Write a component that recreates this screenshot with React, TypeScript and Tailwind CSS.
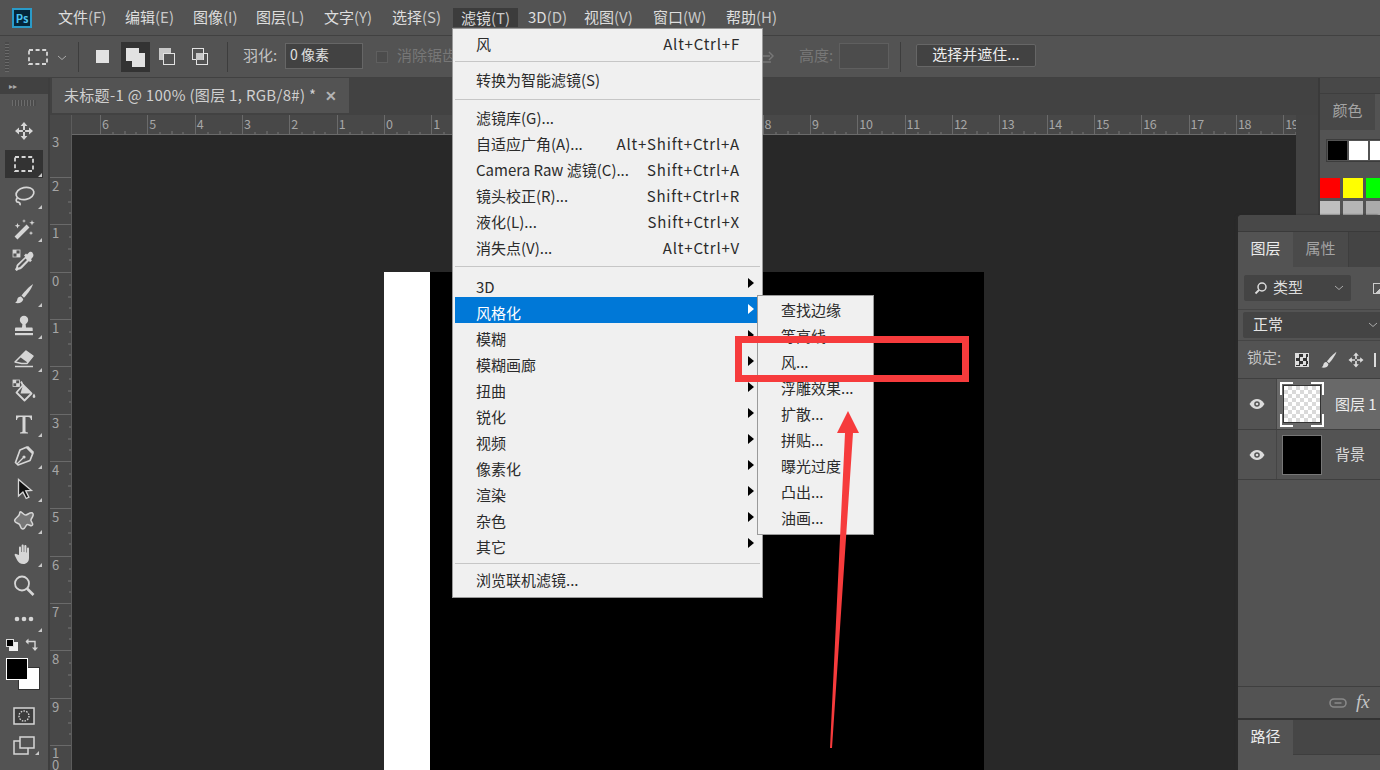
import React from "react";

const FONT = "font-['Noto_Sans_CJK_SC','Noto_Sans',sans-serif]";
const C = "#d6d6d6";

function I({ size = 24, className = "", children }: { size?: number; className?: string; children: React.ReactNode }) {
  return (
    <svg width={size} height={size} viewBox="0 0 24 24" fill="none" className={className}>
      {children}
    </svg>
  );
}

const MoveIcon = ({ size = 24, color = C }: { size?: number; color?: string }) => (
  <I size={size}>
    <path d="M12 3l3.4 4H13v3.9h-2V7H8.6zM12 21l-3.400-4H11v-3.900h2V17h2.400zM3 12l4-3.400V11h3.900v2H7v2.400zM21 12l-4 3.400V13h-3.900v-2H17V8.600z" fill={color} />
  </I>
);
const MarqueeIcon = ({ color = C, w = 1.8 }: { color?: string; w?: number }) => (
  <I>
    <rect x="3" y="5" width="18" height="14" stroke={color} strokeWidth={w} strokeDasharray="4 2.6" />
  </I>
);
const Lasso = () => (
  <I>
    <ellipse cx="13" cy="9.500" rx="9" ry="6" stroke={C} strokeWidth="1.700" transform="rotate(-12 13 9.500)" />
    <path d="M5.500 14c-2 1.500-1.500 4 .5 4.200 1.500.2 2.500 1 2 3" stroke={C} strokeWidth="1.700" />
  </I>
);
const Wand = () => (
  <I>
    <path d="M4 21L16 9" stroke={C} strokeWidth="4" />
    <path d="M5.500 6l.8 2 2 .8-2 .8-.8 2-.8-2-2-.8 2-.8zM20 3l.7 2 2 .7-2 .7-.7 2-.7-2-2-.7 2-.7zM19 14l.6 1.500 1.500.6-1.500.6-.6 1.500-.6-1.500-1.500-.6 1.500-.6zM12 2l.5 1.500 1.500.5-1.500.5-.5 1.500-.5-1.500-1.500-.5 1.500-.5z" fill={C} />
  </I>
);
const Dropper = () => (
  <I>
    <path d="M20.500 3.500c-1.300-1.300-3-.8-4 .5l-1.500 1.500-1-1-2 2 1.200 1.200L5.500 15c-1 1-1.200 2-1.200 3L3 20.500 4.500 22 7 20.500c1 0 2-.3 3-1.200l7-7.200 1 1.100 2-2-1-1 1.500-1.700c1.200-1 1.300-3.200 0-4.500z" fill={C} />
    <path d="M13.500 9.500L6.800 16.200c-.7.700-.8 1.500-.7 2.200.8.100 1.600-.1 2.200-.7l6.700-6.700z" fill="#535353" />
    <rect x="1" y="1" width="7" height="7" fill="#535353" stroke={C} strokeWidth=".8" />
    <path d="M1 1h3.500v3.500H8V8H4.500V4.500H1z" fill={C} />
  </I>
);
const Brush = () => (
  <I>
    <path d="M21 2c-3 2-8 7-11.500 11.500l2.500 2.300C16.500 11 20 5.500 21 2z" fill={C} />
    <path d="M8.500 14.500c-2 .3-3 1.500-3.300 3.300-.2 1.300-1 2.400-2.200 3 3.500 1 7.500 0 8.300-3.500.1-.6-2.300-3-2.800-2.800z" fill={C} />
  </I>
);
const Stamp = () => (
  <I>
    <circle cx="12" cy="6" r="4.200" fill={C} />
    <path d="M10.500 9h3l.5 4.500h5.500c.8 0 1.200.5 1.200 1.200V17H3v-2.300c0-.7.4-1.200 1.200-1.200H10z" fill={C} />
    <rect x="3" y="19" width="18" height="2.200" fill={C} />
  </I>
);
const Eraser = () => (
  <I>
    <path d="M14 4l7 5-6 7.500H9.500L3 15z" stroke={C} strokeWidth="1.500" strokeLinejoin="round" />
    <path d="M14 4l7 5-5.500 6.500-7.500-5.500z" fill={C} />
    <path d="M3 19.500h18" stroke={C} strokeWidth="1.500" />
  </I>
);
const Bucket = () => (
  <I>
    <path d="M11 6l8.500 8.500-7 7-8-8z" stroke={C} strokeWidth="1.800" strokeLinejoin="round" />
    <path d="M9 2.500l3 6" stroke={C} strokeWidth="1.800" />
    <path d="M11 6l8.500 8.500h-11z" fill={C} />
    <path d="M22 14.500c1.300 2 1.500 3 1.200 3.700-.4 1-2 1-2.400 0-.3-.7-.1-1.700 1.200-3.700z" fill={C} />
    <rect x="1" y="1" width="6.500" height="6.500" fill="#535353" stroke={C} strokeWidth=".8" />
    <path d="M1 1h3.200v3.200h3.300v3.300H4.200V4.200H1z" fill={C} />
  </I>
);
const TypeIcon = () => (
  <I>
    <path d="M4 8V3.500h16V8h-1c-.3-2-1-3-3-3h-2.500v14c0 1 .6 1.400 2.500 1.500v1H8v-1c1.900-.1 2.500-.5 2.500-1.500V5H8C6 5 5.300 6 5 8z" fill={C} />
  </I>
);
const Pen = () => (
  <I>
    <path d="M15 3l6 6-3 7.500L6 21l-2.500-2.500L8 6z" stroke={C} strokeWidth="1.700" strokeLinejoin="round" />
    <path d="M15 3l6 6" stroke={C} strokeWidth="3" />
    <path d="M5 20l6-6" stroke={C} strokeWidth="1.300" />
    <circle cx="12" cy="13" r="1.600" fill={C} />
  </I>
);
const Arrow = () => (
  <I>
    <path d="M6.500 2.500v16.500l4.400-3.900 3.300 6.400 2.700-1.300-3.200-6.300 5.800-.5z" fill="#111" stroke={C} strokeWidth="1.300" />
  </I>
);
const Blob = () => (
  <I>
    <path d="M9 3c2 1 3 3.500 5 3s4-3 6.500-2c2 1.500-.5 5-1.500 6.500s2.500 3.500 1.500 5.500-3-.5-5-.5-1.500 4-4.500 4.500-2-4-4-5S1.500 13 3 10.500 7 7.500 7.500 5 8 2.700 9 3z" fill="#777" stroke={C} strokeWidth="1.500" />
  </I>
);
const Hand = () => (
  <I>
    <path d="M7 13V5.500c0-1.500 2-1.500 2 0V10h.6V3.500c0-1.500 2.100-1.500 2.100 0V10h.6V4c0-1.500 2.100-1.500 2.100 0v6.500h.6V6.500c0-1.500 2-1.500 2 0V16c0 3.500-2.300 6-5.600 6-3.300 0-4.800-1.500-6.200-3.800L2.800 13.500c-.8-1.500 1-2.500 2-1.300z" fill={C} />
  </I>
);
const Zoom = () => (
  <I>
    <circle cx="10" cy="9.500" r="7" stroke={C} strokeWidth="1.800" />
    <path d="M15 14.500l6.500 6.500" stroke={C} strokeWidth="2.600" />
  </I>
);
const Dots = () => (
  <I>
    <circle cx="5" cy="12" r="2.300" fill={C} />
    <circle cx="12" cy="12" r="2.300" fill={C} />
    <circle cx="19" cy="12" r="2.300" fill={C} />
  </I>
);
const QuickMask = () => (
  <I>
    <rect x="2" y="4" width="20" height="16" fill="#3c3c3c" stroke={C} strokeWidth="1.500" />
    <circle cx="12" cy="12" r="5" stroke={C} strokeWidth="1.400" strokeDasharray="1.500 1.300" />
  </I>
);
const ScreenMode = () => (
  <I>
    <rect x="2" y="7" width="14" height="13" stroke={C} strokeWidth="1.500" />
    <rect x="8" y="3" width="14" height="11" fill="#535353" stroke={C} strokeWidth="1.500" />
  </I>
);

const menuItems = [
  { t: "文件", k: "(F)", c: "w-[67px]" },
  { t: "编辑", k: "(E)", c: "w-[68px]" },
  { t: "图像", k: "(I)", c: "w-[63px]" },
  { t: "图层", k: "(L)", c: "w-[68px]" },
  { t: "文字", k: "(Y)", c: "w-[68px]" },
  { t: "选择", k: "(S)", c: "w-[61px]" },
];
const menuItems2 = [
  { t: "3D", k: "(D)", c: "w-[56px]" },
  { t: "视图", k: "(V)", c: "w-[69px]" },
  { t: "窗口", k: "(W)", c: "w-[73px]" },
  { t: "帮助", k: "(H)", c: "w-[60px]" },
];

function MenuLabel({ t, k }: { t: string; k: string }) {
  return (
    <span className="whitespace-nowrap">
      {t}
      <span className="text-[#c8c8c8]">{k}</span>
    </span>
  );
}

function MenuBar() {
  return (
    <div className="flex h-[35px] items-center bg-[#535353] text-[15px] leading-[20px] text-[#dedede]">
      <div className="ml-[12px] flex h-[20px] w-[20px] items-center justify-center border-2 border-[#2a9bc9] bg-[#04263a] text-[11px] font-bold text-[#4cc3f0]">
        Ps
      </div>
      <div className="ml-[26px] flex pb-[2px]">
        {menuItems.map((m) => (
          <div key={m.t} className={m.c}>
            <MenuLabel t={m.t} k={m.k} />
          </div>
        ))}
      </div>
      <div className="flex h-[19px] w-[65px] items-center justify-center bg-[#3c3c3c]">
        <MenuLabel t="滤镜" k="(T)" />
      </div>
      <div className="ml-[10px] flex pb-[2px]">
        {menuItems2.map((m) => (
          <div key={m.t} className={m.c}>
            <MenuLabel t={m.t} k={m.k} />
          </div>
        ))}
      </div>
    </div>
  );
}

function OptionsBar() {
  return (
    <div className="flex h-[43px] items-center border-y border-[#414141] bg-[#535353] text-[15px]">
      <div className="ml-[5px] h-[30px] w-[4px] bg-[repeating-linear-gradient(0deg,#6a6a6a_0_1px,#4a4a4a_1px_3px)]" />
      <div className="ml-[17px] flex h-[24px] w-[24px] items-center">
        <MarqueeIcon />
      </div>
      <svg width="10" height="6" viewBox="0 0 10 6" className="ml-[7px] mt-[3px]" fill="none">
        <path d="M1 1l4 3.500L9 1" stroke="#aaa" />
      </svg>
      <div className="ml-[11px] h-[30px] w-px bg-[#3d3d3d]" />
      <div className="ml-[17px] h-[13px] w-[13px] bg-[#e2e2e2]" />
      <div className="relative ml-[12px] h-[30px] w-[29px] bg-[#333333]">
        <div className="absolute left-[5px] top-[6px] h-[13px] w-[13px] bg-[#e2e2e2]" />
        <div className="absolute left-[11px] top-[11px] h-[14px] w-[13px] bg-[#e2e2e2]" />
      </div>
      <div className="relative ml-[9px] h-[18px] w-[17px]">
        <div className="absolute left-0 top-0 h-[12px] w-[12px] bg-[#c8c8c8]" />
        <div className="absolute left-[4px] top-[5px] h-[12px] w-[12px] border border-[#e2e2e2] bg-[#535353]" />
      </div>
      <div className="relative ml-[16px] h-[18px] w-[17px]">
        <div className="absolute left-0 top-0 h-[12px] w-[12px] border border-[#e2e2e2]" />
        <div className="absolute left-[4px] top-[5px] h-[12px] w-[12px] border border-[#e2e2e2]" />
        <div className="absolute left-[4px] top-[5px] h-[7px] w-[7px] bg-[#c8c8c8]" />
      </div>
      <div className="ml-[18px] h-[30px] w-px bg-[#3d3d3d]" />
      <span className="mb-[3px] ml-[15px] w-[42px] whitespace-nowrap text-[#c4c4c4]">羽化:</span>
      <div className="mb-[2px] flex h-[26px] w-[78px] items-center border border-[#666] bg-[#424242] pb-[2px] pl-[4px] text-[14px] text-[#e0e0e0]">
        0 像素
      </div>
      <div className="ml-[13px] h-[12px] w-[12px] border border-[#5f5f5f] bg-[#4c4c4c]" />
      <span className="mb-[3px] ml-[9px] w-[60px] whitespace-nowrap text-[#777]">消除锯齿</span>
      <svg width="12" height="14" viewBox="0 0 12 14" fill="none" className="ml-[305px] shrink-0">
        <path d="M0 6h8M7 2l4 4-4 4M0 12h9" stroke="#777" strokeWidth="1.500" />
      </svg>
      <span className="mb-[3px] ml-[25px] w-[40px] whitespace-nowrap text-[#777]">高度:</span>
      <div className="mb-[2px] h-[26px] w-[50px] border border-[#5f5f5f] bg-[#4c4c4c]" />
      <div className="ml-[11px] h-[30px] w-px bg-[#3d3d3d]" />
      <div className="mb-[2px] ml-[15px] flex h-[23px] w-[120px] items-center justify-center rounded-[2px] border border-[#666] bg-[#424242] pb-[2px] text-[15px] text-[#ececec]">
        选择并遮住...
      </div>
    </div>
  );
}

const tools: { n: string; el: React.ReactNode; tri?: boolean; sel?: boolean }[] = [
  { n: "move", el: <MoveIcon /> },
  { n: "marquee", el: <MarqueeIcon />, tri: true, sel: true },
  { n: "lasso", el: <Lasso />, tri: true },
  { n: "wand", el: <Wand />, tri: true },
  { n: "dropper", el: <Dropper /> },
  { n: "brush", el: <Brush />, tri: true },
  { n: "stamp", el: <Stamp />, tri: true },
  { n: "eraser", el: <Eraser />, tri: true },
  { n: "bucket", el: <Bucket /> },
  { n: "type", el: <TypeIcon />, tri: true },
  { n: "pen", el: <Pen />, tri: true },
  { n: "arrow", el: <Arrow />, tri: true },
  { n: "blob", el: <Blob />, tri: true },
  { n: "hand", el: <Hand />, tri: true },
  { n: "zoom", el: <Zoom /> },
  { n: "dots", el: <Dots />, tri: true },
];

function Toolbar() {
  return (
    <div className="flex w-[50px] shrink-0 flex-col border-r-2 border-[#3e3e3e] bg-[#535353]">
      <div className="flex h-[16px] items-center bg-[#414141] pl-[9px] text-[8px] leading-none text-[#aaa]">▸▸</div>
      <div className="flex h-[21px] justify-center pt-[6px]">
        <div className="h-[6px] w-[24px] bg-[repeating-linear-gradient(90deg,#6c6c6c_0_1px,#4c4c4c_1px_3px)]" />
      </div>
      {tools.map((t) => (
        <div key={t.n} className="flex h-[32.500px] items-center justify-center">
          <div className={`relative flex h-[28px] w-[38px] items-center justify-center ${t.sel ? "bg-[#333333]" : ""}`}>
            {t.el}
            {t.tri && (
              <div className="absolute bottom-[1px] right-[1px] h-0 w-0 border-b-[4px] border-l-[4px] border-b-[#c8c8c8] border-l-transparent" />
            )}
          </div>
        </div>
      ))}
      <div className="flex h-[20px] items-center justify-between pl-[6px] pr-[9px]">
        <div className="relative h-[13px] w-[13px]">
          <div className="absolute left-[3px] top-[3px] h-[9px] w-[9px] bg-[#eee]" />
          <div className="absolute left-0 top-0 h-[8px] w-[8px] border border-[#ddd] bg-black" />
        </div>
        <svg width="14" height="14" viewBox="0 0 14 14" fill="none">
          <path d="M1 3.500h9v7" stroke={C} strokeWidth="1.400" />
          <path d="M3.500 .5L.5 3.500l3 3zM7 9.500h6l-3 3.500z" fill={C} />
        </svg>
      </div>
      <div className="relative mt-[3px] h-[38px]">
        <div className="absolute left-[18px] top-[9px] h-[23px] w-[22px] border border-[#333] bg-white" />
        <div className="absolute left-[6px] top-0 h-[22px] w-[22px] border border-white bg-black" />
      </div>
      <div className="mt-[5px] flex h-[30px] items-center justify-center">
        <QuickMask />
      </div>
      <div className="relative flex h-[30px] items-center justify-center">
        <ScreenMode />
        <div className="absolute bottom-[6px] right-[9px] h-0 w-0 border-b-[4px] border-l-[4px] border-b-[#c8c8c8] border-l-transparent" />
      </div>
    </div>
  );
}

const hLabels = ["6","5","4","3","2","1","0","1","","","","","","","8","9","10","11","12","13","14","15","16","17","18","19"];
const vLabels = ["2","1","0","1","2","3","4","5","6","7","8","9"];

function HRuler() {
  return (
    <div className="flex h-[20px] w-[1224px] overflow-hidden border-b border-[#6a6a6a] bg-[#484848] pl-[28px]">
      {hLabels.map((l, i) => (
        <div key={i} className="relative h-[20px] w-[47.330px] shrink-0 border-l border-[#6a6a6a] pl-[1px] text-[12.500px] leading-[17px] tracking-[-0.3px] text-[#a6a6a6]">
          {l}
          <svg className="absolute bottom-0 left-0" width="47" height="4" fill="none">
            <path d="M12 1v3M24 0v4M35 1v3" stroke="#777" />
          </svg>
        </div>
      ))}
    </div>
  );
}

function VRuler() {
  const cell = "relative h-[47.330px] w-[22px] shrink-0 border-t border-[#6a6a6a] pl-[2px] pt-[1px] text-[13px] leading-[14px] text-[#a6a6a6]";
  return (
    <div className="flex w-[22px] shrink-0 flex-col overflow-hidden border-r border-[#5c5c5c] bg-[#484848]">
      <div className="relative h-[42px] w-[22px] shrink-0 pl-[2px] text-[13px] leading-[14px] text-[#a6a6a6]">3</div>
      {vLabels.map((l, i) => (
        <div key={i} className={cell}>
          {l}
          <svg className="absolute right-0 top-0" width="4" height="47" fill="none">
            <path d="M1 12h3M0 24h4M1 35h3" stroke="#777" />
          </svg>
        </div>
      ))}
      <div className={cell}>
        <div className="leading-[12px]">
          1<br />0
        </div>
      </div>
    </div>
  );
}

function Center() {
  return (
    <div className="flex w-[1268px] shrink-0 flex-col bg-[#434343]">
      <div className="flex h-[37px] items-start bg-[#424242]">
        <div className="ml-[2px] flex h-[35px] w-[297px] items-center bg-[#535353] pl-[12px] text-[15px] tracking-[0.3px] text-[#d0d0d0]">
          <span className="whitespace-nowrap">未标题-1 @ 100% (图层 1, RGB/8#) *</span>
          <span className="ml-[9px] text-[14px] font-bold text-[#b4b4b4]">✕</span>
        </div>
      </div>
      <div className="flex h-[20px]">
        <div className="h-[20px] w-[22px] border-r border-[#5c5c5c] bg-[#484848]" />
        <HRuler />
      </div>
      <div className="flex h-[635px] overflow-hidden">
        <VRuler />
        <div className="flex h-[635px] w-[1224px] bg-[#282828] pl-[312px] pt-[137px]">
          <div className="h-[498px] w-[46px] bg-white" />
          <div className="h-[498px] w-[554px] bg-black" />
        </div>
      </div>
    </div>
  );
}

function Dock() {
  return (
    <div className="flex flex-1 flex-col border-l-2 border-[#3a3a3a] bg-[#535353]">
      <div className="h-[16px] border-b border-[#3e3e3e] bg-[#484848]" />
      <div className="flex h-[36px] w-[55px] items-center justify-center bg-[#484848] pb-[3px] text-[15px] text-[#a4a4a4]">颜色</div>
      <div className="ml-[6px] mt-[9px] flex h-[23px] gap-[2px] border border-[#3c3c3c] p-[1px]">
        <div className="h-[19px] w-[19px] shrink-0 bg-black" />
        <div className="h-[19px] w-[19px] shrink-0 bg-white" />
        <div className="h-[19px] w-[19px] shrink-0 bg-white" />
      </div>
      <div className="mt-[16px] flex gap-[3px]">
        <div className="h-[20px] w-[20px] shrink-0 bg-[#ff0000]" />
        <div className="h-[20px] w-[20px] shrink-0 bg-[#ffff00]" />
        <div className="h-[20px] w-[20px] shrink-0 bg-[#00ff00]" />
      </div>
      <div className="mt-[3px] flex gap-[3px]">
        <div className="h-[20px] w-[20px] shrink-0 bg-[#bfbfbf]" />
        <div className="h-[20px] w-[20px] shrink-0 bg-[#b5b5b5]" />
        <div className="h-[20px] w-[20px] shrink-0 bg-[#ababab]" />
      </div>
    </div>
  );
}

function Chevron() {
  return (
    <svg width="10" height="6" viewBox="0 0 10 6" fill="none" className="shrink-0">
      <path d="M1 1l4 3.500L9 1" stroke="#aaa" />
    </svg>
  );
}

function Eye() {
  return (
    <svg width="16" height="12" viewBox="0 0 16 12" fill="none">
      <path d="M.5 6C3 2 5.500 1 8 1s5 1 7.500 5C13 10 10.500 11 8 11S3 10 .5 6z" fill="#dcdcdc" />
      <circle cx="8" cy="6" r="2.800" fill="#535353" />
      <circle cx="8" cy="6" r="1.300" fill="#dcdcdc" />
    </svg>
  );
}

function LayersPanel() {
  return (
    <div className="absolute left-[1238px] top-[215px] flex h-[555px] w-[142px] flex-col overflow-hidden rounded-tl-[4px] bg-[#535353] text-[15px] shadow-[-2px_0_2px_#2a2a2a]">
      <div className="h-[17px] shrink-0 border-b border-[#3a3a3a] bg-[#484848]" />
      <div className="flex h-[35px] shrink-0 bg-[#444444]">
        <div className="flex w-[55px] items-center justify-center bg-[#535353] pb-[2px] text-[#ececec]">图层</div>
        <div className="flex w-[56px] items-center justify-center border-r border-[#3e3e3e] bg-[#4a4a4a] pb-[2px] text-[#a4a4a4]">属性</div>
      </div>
      <div className="flex h-[43px] shrink-0 items-center border-b border-[#454545] pl-[6px]">
        <div className="flex h-[26px] w-[107px] shrink-0 items-center rounded-[2px] bg-[#444444] pl-[10px] pr-[7px] text-[#dcdcdc]">
          <svg width="14" height="14" viewBox="0 0 14 14" fill="none" className="shrink-0">
            <circle cx="8" cy="6" r="4" stroke="#dcdcdc" strokeWidth="1.500" />
            <path d="M5 9l-3.500 3.500" stroke="#dcdcdc" strokeWidth="1.800" />
          </svg>
          <span className="ml-[5px] flex-1 pb-[2px]">类型</span>
          <Chevron />
        </div>
        <div className="ml-[22px] h-[11px] w-[12px] shrink-0 border border-[#ccc] bg-[linear-gradient(135deg,#535353_55%,#ccc_55%)]" />
      </div>
      <div className="flex h-[31px] shrink-0 items-center border-b border-[#454545] pl-[5px]">
        <div className="flex h-[26px] w-[137px] shrink-0 items-center justify-between rounded-l-[2px] bg-[#444444] pl-[10px] pr-[2px] text-[#e4e4e4]">
          <span className="pb-[2px]">正常</span>
          <Chevron />
        </div>
      </div>
      <div className="flex h-[38px] shrink-0 items-center border-b border-[#3f3f3f] pl-[9px]">
        <span className="mb-[4px] w-[48px] whitespace-nowrap text-[#c4c4c4]">锁定:</span>
        <div className="h-[14px] w-[14px] shrink-0 border border-[#ddd] bg-[conic-gradient(#333_25%,#ddd_0_50%,#333_0_75%,#ddd_0)] bg-[length:7px_7px]" />
        <div className="ml-[10px] shrink-0">
          <svg width="20" height="20" viewBox="0 0 24 24">
            <path d="M21 2c-3 2-8 7-11.500 11.500l2.500 2.300C16.500 11 20 5.500 21 2z" fill="#dcdcdc" />
            <path d="M8.500 14.500c-2 .3-3 1.500-3.300 3.300-.2 1.300-1 2.400-2.200 3 3.500 1 7.500 0 8.300-3.500.1-.6-2.300-3-2.800-2.800z" fill="#dcdcdc" />
          </svg>
        </div>
        <div className="ml-[7px] shrink-0">
          <MoveIcon size={20} color="#dcdcdc" />
        </div>
        <div className="ml-[8px] h-[14px] w-[2px] shrink-0 bg-[#dcdcdc]" />
      </div>
      <div className="flex h-[51px] shrink-0 border-b border-[#3f3f3f]">
        <div className="flex w-[39px] shrink-0 items-center justify-center border-r border-[#454545]">
          <Eye />
        </div>
        <div className="flex flex-1 items-center bg-[#696969] pl-[3px]">
          <div className="relative flex h-[45px] w-[44px] shrink-0 items-center justify-center">
            <div className="h-[38px] w-[38px] border border-[#333] bg-[repeating-conic-gradient(#d9d9d9_0_25%,#ffffff_0_50%)] bg-[length:8px_8px]" />
            <div className="absolute left-0 top-0 h-[13px] w-[13px] border-l-2 border-t-2 border-white" />
            <div className="absolute right-0 top-0 h-[13px] w-[13px] border-r-2 border-t-2 border-white" />
            <div className="absolute bottom-0 left-0 h-[13px] w-[13px] border-b-2 border-l-2 border-white" />
            <div className="absolute bottom-0 right-0 h-[13px] w-[13px] border-b-2 border-r-2 border-white" />
          </div>
          <span className="ml-[11px] whitespace-nowrap text-[#ececec]">图层 1</span>
        </div>
      </div>
      <div className="flex h-[50px] shrink-0 border-b border-[#3f3f3f]">
        <div className="flex w-[39px] shrink-0 items-center justify-center border-r border-[#454545]">
          <Eye />
        </div>
        <div className="flex flex-1 items-center pl-[5px]">
          <div className="h-[40px] w-[40px] shrink-0 border border-[#777] bg-black" />
          <span className="ml-[13px] whitespace-nowrap text-[#dcdcdc]">背景</span>
        </div>
      </div>
      <div className="flex-1" />
      <div className="flex h-[32px] shrink-0 items-center border-t border-[#3f3f3f] pl-[91px]">
        <svg width="18" height="10" viewBox="0 0 18 10" fill="none" className="shrink-0">
          <rect x="1" y="1" width="16" height="8" rx="4" stroke="#888" strokeWidth="1.600" />
          <path d="M5.500 5h7" stroke="#888" strokeWidth="1.600" />
        </svg>
        <span className="ml-[9px] font-['Liberation_Serif',serif] text-[19px] italic text-[#c4c4c4]">fx</span>
      </div>
      <div className="h-[2px] shrink-0 bg-[#333333]" />
      <div className="flex h-[35px] shrink-0">
        <div className="flex w-[55px] items-center justify-center pb-[2px] text-[#ececec]">路径</div>
        <div className="flex-1 border-b border-[#3e3e3e] bg-[#464646]" />
      </div>
      <div className="h-[15px] shrink-0" />
    </div>
  );
}

type Row = { t?: string; s?: string; sub?: boolean; hi?: boolean; sep?: string };
const rows: Row[] = [
  { t: "风", s: "Alt+Ctrl+F" },
  { sep: "h-[10px] pt-[6px]" },
  { t: "转换为智能滤镜(S)" },
  { sep: "h-[12px] pt-[8px]" },
  { t: "滤镜库(G)..." },
  { t: "自适应广角(A)...", s: "Alt+Shift+Ctrl+A" },
  { t: "Camera Raw 滤镜(C)...", s: "Shift+Ctrl+A" },
  { t: "镜头校正(R)...", s: "Shift+Ctrl+R" },
  { t: "液化(L)...", s: "Shift+Ctrl+X" },
  { t: "消失点(V)...", s: "Alt+Ctrl+V" },
  { sep: "h-[12px] pt-[7px]" },
  { t: "3D", sub: true },
  { t: "风格化", sub: true, hi: true },
  { t: "模糊", sub: true },
  { t: "模糊画廊", sub: true },
  { t: "扭曲", sub: true },
  { t: "锐化", sub: true },
  { t: "视频", sub: true },
  { t: "像素化", sub: true },
  { t: "渲染", sub: true },
  { t: "杂色", sub: true },
  { t: "其它", sub: true },
  { sep: "h-[8px] pt-[6px]" },
  { t: "浏览联机滤镜..." },
];

function FilterMenu() {
  return (
    <div className="absolute left-[452px] top-[28px] h-[570px] w-[311px] border border-[#9a9a9a] bg-[#f0f0f0] text-[15px] text-[#2b2b2b]">
      {rows.map((r, i) =>
        r.sep ? (
          <div key={i} className={`box-border ${r.sep} px-[2px]`}>
            <div className="h-[1px] bg-[#c6c6c6]" />
          </div>
        ) : (
          <div
            key={i}
            className={`relative mx-[2px] box-border flex h-[26px] justify-between whitespace-nowrap pl-[21px] pr-[20px] leading-[26px] ${r.sub ? "pt-[3px]" : "pt-[2px]"} ${r.hi ? "bg-[#0078d7] text-white" : ""}`}
          >
            <span>{r.t}</span>
            {r.s && <span className="tracking-[0.8px]">{r.s}</span>}
            {r.sub && (
              <div
                className={`absolute right-[6px] top-[7px] h-0 w-0 border-y-[5px] border-l-[6px] border-y-transparent ${r.hi ? "border-l-white" : "border-l-black"}`}
              />
            )}
          </div>
        ),
      )}
    </div>
  );
}

const subRows = ["查找边缘", "等高线", "风...", "浮雕效果...", "扩散...", "拼贴...", "曝光过度", "凸出...", "油画..."];

function SubMenu() {
  return (
    <div className="absolute left-[757px] top-[295px] h-[240px] w-[117px] border border-[#9a9a9a] bg-[#f0f0f0] pt-[1px] text-[15px] text-[#2b2b2b]">
      {subRows.map((t) => (
        <div key={t} className="h-[26px] whitespace-nowrap pl-[23px] leading-[26px]">
          {t}
        </div>
      ))}
    </div>
  );
}

function Annotation() {
  return (
    <>
      <div className="absolute left-[735px] top-[336px] h-[46px] w-[234px] border-[7px] border-[#f63b3c]" />
      <svg className="absolute left-0 top-0" width="1380" height="770" fill="none">
        <path d="M848 411L859 433H853L832 748H830L845 433H837Z" fill="#f63b3c" />
      </svg>
    </>
  );
}

export default function App() {
  return (
    <div className={`relative h-[770px] w-[1380px] overflow-hidden bg-[#535353] ${FONT}`}>
      <MenuBar />
      <OptionsBar />
      <div className="flex h-[692px]">
        <Toolbar />
        <Center />
        <Dock />
      </div>
      <LayersPanel />
      <FilterMenu />
      <SubMenu />
      <Annotation />
    </div>
  );
}
